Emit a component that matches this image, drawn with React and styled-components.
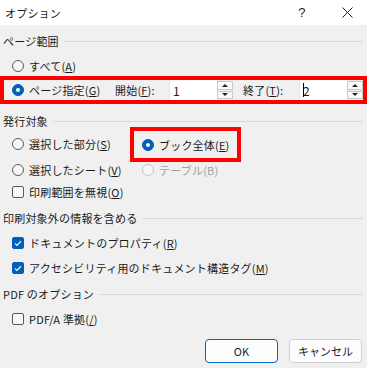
import React from "react"
import styled, { createGlobalStyle } from "styled-components"

const GlobalStyle = createGlobalStyle`
  html, body {
    margin: 0;
    padding: 0;
    background: #f0f0f0;
  }
  body {
    font-family: "Noto Sans CJK JP", "Noto Sans", sans-serif;
    font-size: 11px;
    letter-spacing: 0.2px;
    color: #1a1a1a;
  }
`

const Dialog = styled.div`
  width: 367px;
  height: 368px;
  background: #f0f0f0;
  display: flex;
  flex-direction: column;
  overflow: hidden;
`

const TitleBar = styled.div`
  height: 25px;
  background: #ffffff;
  display: flex;
  align-items: center;
  padding-left: 5px;
  font-size: 11px;
`

const TitleText = styled.span`
  flex: 1;
`

const TitleButton = styled.span`
  width: ${p => p.$w}px;
  display: flex;
  justify-content: center;
  align-items: center;
  font-family: "Liberation Sans", sans-serif;
  font-size: 13px;
  color: #222;
`

const Body = styled.div`
  flex: 1;
  display: flex;
  flex-direction: column;
`

const SectionHeader = styled.div`
  height: 20px;
  margin-top: ${p => p.$top || 6}px;
  padding: 0 4px 0 3px;
  display: flex;
  align-items: center;
  gap: 5px;

  &::after {
    content: "";
    flex: 1;
    height: 1px;
    background: #d9d9d9;
  }
`

const Row = styled.div`
  height: ${p => p.$h || 24}px;
  margin-top: ${p => p.$top || 0}px;
  padding-left: 12px;
  display: flex;
  align-items: center;
`

const Option = styled.label`
  display: flex;
  align-items: center;
  gap: 5px;
  white-space: nowrap;
  color: ${p => (p.$disabled ? "#a0a0a0" : "#1a1a1a")};
`

const Radio = styled.span`
  width: 12px;
  height: 12px;
  box-sizing: border-box;
  border-radius: 50%;
  flex: none;
  border: 1px solid ${p => (p.$disabled ? "#c4c4c4" : p.$checked ? "#005fb8" : "#5a5a5a")};
  background: ${p => (p.$checked ? "#005fb8" : "#f7f7f7")};
  display: flex;
  align-items: center;
  justify-content: center;

  &::after {
    content: "";
    display: ${p => (p.$checked ? "block" : "none")};
    width: 4px;
    height: 4px;
    border-radius: 50%;
    background: #fff;
  }
`

const Box = styled.span`
  width: 12px;
  height: 12px;
  box-sizing: border-box;
  border-radius: 2px;
  flex: none;
  border: 1px solid ${p => (p.$checked ? "#005fb8" : "#5a5a5a")};
  background: ${p => (p.$checked ? "#005fb8" : "#f7f7f7")};
  display: flex;
  align-items: center;
  justify-content: center;
`

const Highlight = styled.div`
  height: 28px;
  margin-top: -1px;
  box-sizing: border-box;
  border: 4px solid #ff0000;
  padding-left: 8px;
  display: flex;
  align-items: center;
`

const FieldLabel = styled.span`
  width: ${p => p.$w}px;
  flex: none;
  white-space: nowrap;
`

const Spin = styled.div`
  width: 64px;
  height: 20px;
  flex: none;
  display: flex;
  background: #fff;
  border-left: 1px solid #e6e6e6;
  box-sizing: border-box;
`

const SpinValue = styled.span`
  flex: 1;
  display: flex;
  align-items: center;
  padding-left: 3px;
  font-size: 12px;
`

const Caret = styled.span`
  width: 1px;
  height: 14px;
  background: #000;
  margin-right: -1px;
`

const SpinButtons = styled.div`
  width: 16px;
  display: flex;
  flex-direction: column;
  gap: 1px;
  padding: 1px 0;
  background: #f0f0f0;
  box-sizing: border-box;
`

const SpinButton = styled.span`
  flex: 1;
  background: #fafafa;
  border: 1px solid #c8c8c8;
  display: flex;
  align-items: center;
  justify-content: center;

  &::after {
    content: "";
    border-left: 3px solid transparent;
    border-right: 3px solid transparent;
    ${p => (p.$down ? "border-top: 3px solid #222;" : "border-bottom: 3px solid #222;")}
  }
`

const Grid = styled.div`
  display: grid;
  grid-template-columns: 118px 1fr;
  grid-template-rows: 26px 25px 20px;
  padding-left: 12px;
  align-items: center;
`

const Cell = styled.div`
  display: flex;
  align-items: center;
  padding-left: ${p => p.$pad || 0}px;
`

const BoxedCell = styled.div`
  width: 111px;
  height: 35px;
  margin: -4px 0 -5px;
  box-sizing: border-box;
  border: 4px solid #ff0000;
  padding-left: 8px;
  display: flex;
  align-items: center;
`

const Footer = styled.div`
  margin-top: 8px;
  padding-right: 5px;
  display: flex;
  justify-content: flex-end;
  gap: 11px;
`

const Button = styled.button`
  width: 73px;
  height: 24px;
  border-radius: 4px;
  border: 1px solid ${p => (p.$primary ? "#0067c0" : "#d0d0d0")};
  background: #fdfdfd;
  font-family: "Noto Sans CJK JP", "Noto Sans", sans-serif;
  font-size: 11px;
  color: #1a1a1a;
  padding: 0;
`

const Check = () => (
  <svg width="8" height="7" viewBox="0 0 8 7">
    <path d="M1 3.6 L3 5.5 L7 1.2" fill="none" stroke="#fff" strokeWidth="1.2" />
  </svg>
)

const CheckBox = ({ checked, children }) => (
  <Option>
    <Box $checked={checked}>{checked && <Check />}</Box>
    <span>{children}</span>
  </Option>
)

const RadioOption = ({ checked, disabled, children }) => (
  <Option $disabled={disabled}>
    <Radio $checked={checked} $disabled={disabled} />
    <span>{children}</span>
  </Option>
)

const SpinBox = ({ value, caret }) => (
  <Spin>
    <SpinValue>
      {caret && <Caret />}
      {value}
    </SpinValue>
    <SpinButtons>
      <SpinButton />
      <SpinButton $down />
    </SpinButtons>
  </Spin>
)

const App = () => (
  <Dialog>
    <GlobalStyle />
    <TitleBar>
      <TitleText>オプション</TitleText>
      <TitleButton $w={50}>?</TitleButton>
      <TitleButton $w={40}>
        <svg width="11" height="11" viewBox="0 0 11 11">
          <path d="M0.5 0.5 L10.5 10.5 M10.5 0.5 L0.5 10.5" stroke="#222" strokeWidth="1" />
        </svg>
      </TitleButton>
    </TitleBar>
    <Body>
      <SectionHeader $top={6}>ページ範囲</SectionHeader>
      <Row $h={22} $top={4}>
        <RadioOption>すべて(<u>A</u>)</RadioOption>
      </Row>
      <Highlight>
        <FieldLabel $w={103}>
          <RadioOption checked>ページ指定(<u>G</u>)</RadioOption>
        </FieldLabel>
        <FieldLabel $w={54}>開始(<u>F</u>):</FieldLabel>
        <SpinBox value="1" />
        <FieldLabel $w={10} />
        <FieldLabel $w={56}>終了(<u>T</u>):</FieldLabel>
        <SpinBox value="2" caret />
      </Highlight>

      <SectionHeader $top={7}>発行対象</SectionHeader>
      <Grid>
        <Cell>
          <RadioOption>選択した部分(<u>S</u>)</RadioOption>
        </Cell>
        <BoxedCell>
          <RadioOption checked>ブック全体(<u>E</u>)</RadioOption>
        </BoxedCell>
        <Cell>
          <RadioOption>選択したシート(<u>V</u>)</RadioOption>
        </Cell>
        <Cell $pad={12}>
          <RadioOption disabled>テーブル(B)</RadioOption>
        </Cell>
        <Cell>
          <CheckBox>印刷範囲を無視(<u>O</u>)</CheckBox>
        </Cell>
      </Grid>

      <SectionHeader $top={6}>印刷対象外の情報を含める</SectionHeader>
      <Row $top={3}>
        <CheckBox checked>ドキュメントのプロパティ(<u>R</u>)</CheckBox>
      </Row>
      <Row $top={1}>
        <CheckBox checked>アクセシビリティ用のドキュメント構造タグ(<u>M</u>)</CheckBox>
      </Row>

      <SectionHeader $top={4}>PDF のオプション</SectionHeader>
      <Row $top={3}>
        <CheckBox>PDF/A 準拠(<u>/</u>)</CheckBox>
      </Row>

      <Footer>
        <Button $primary>OK</Button>
        <Button>キャンセル</Button>
      </Footer>
    </Body>
  </Dialog>
)

export default App
